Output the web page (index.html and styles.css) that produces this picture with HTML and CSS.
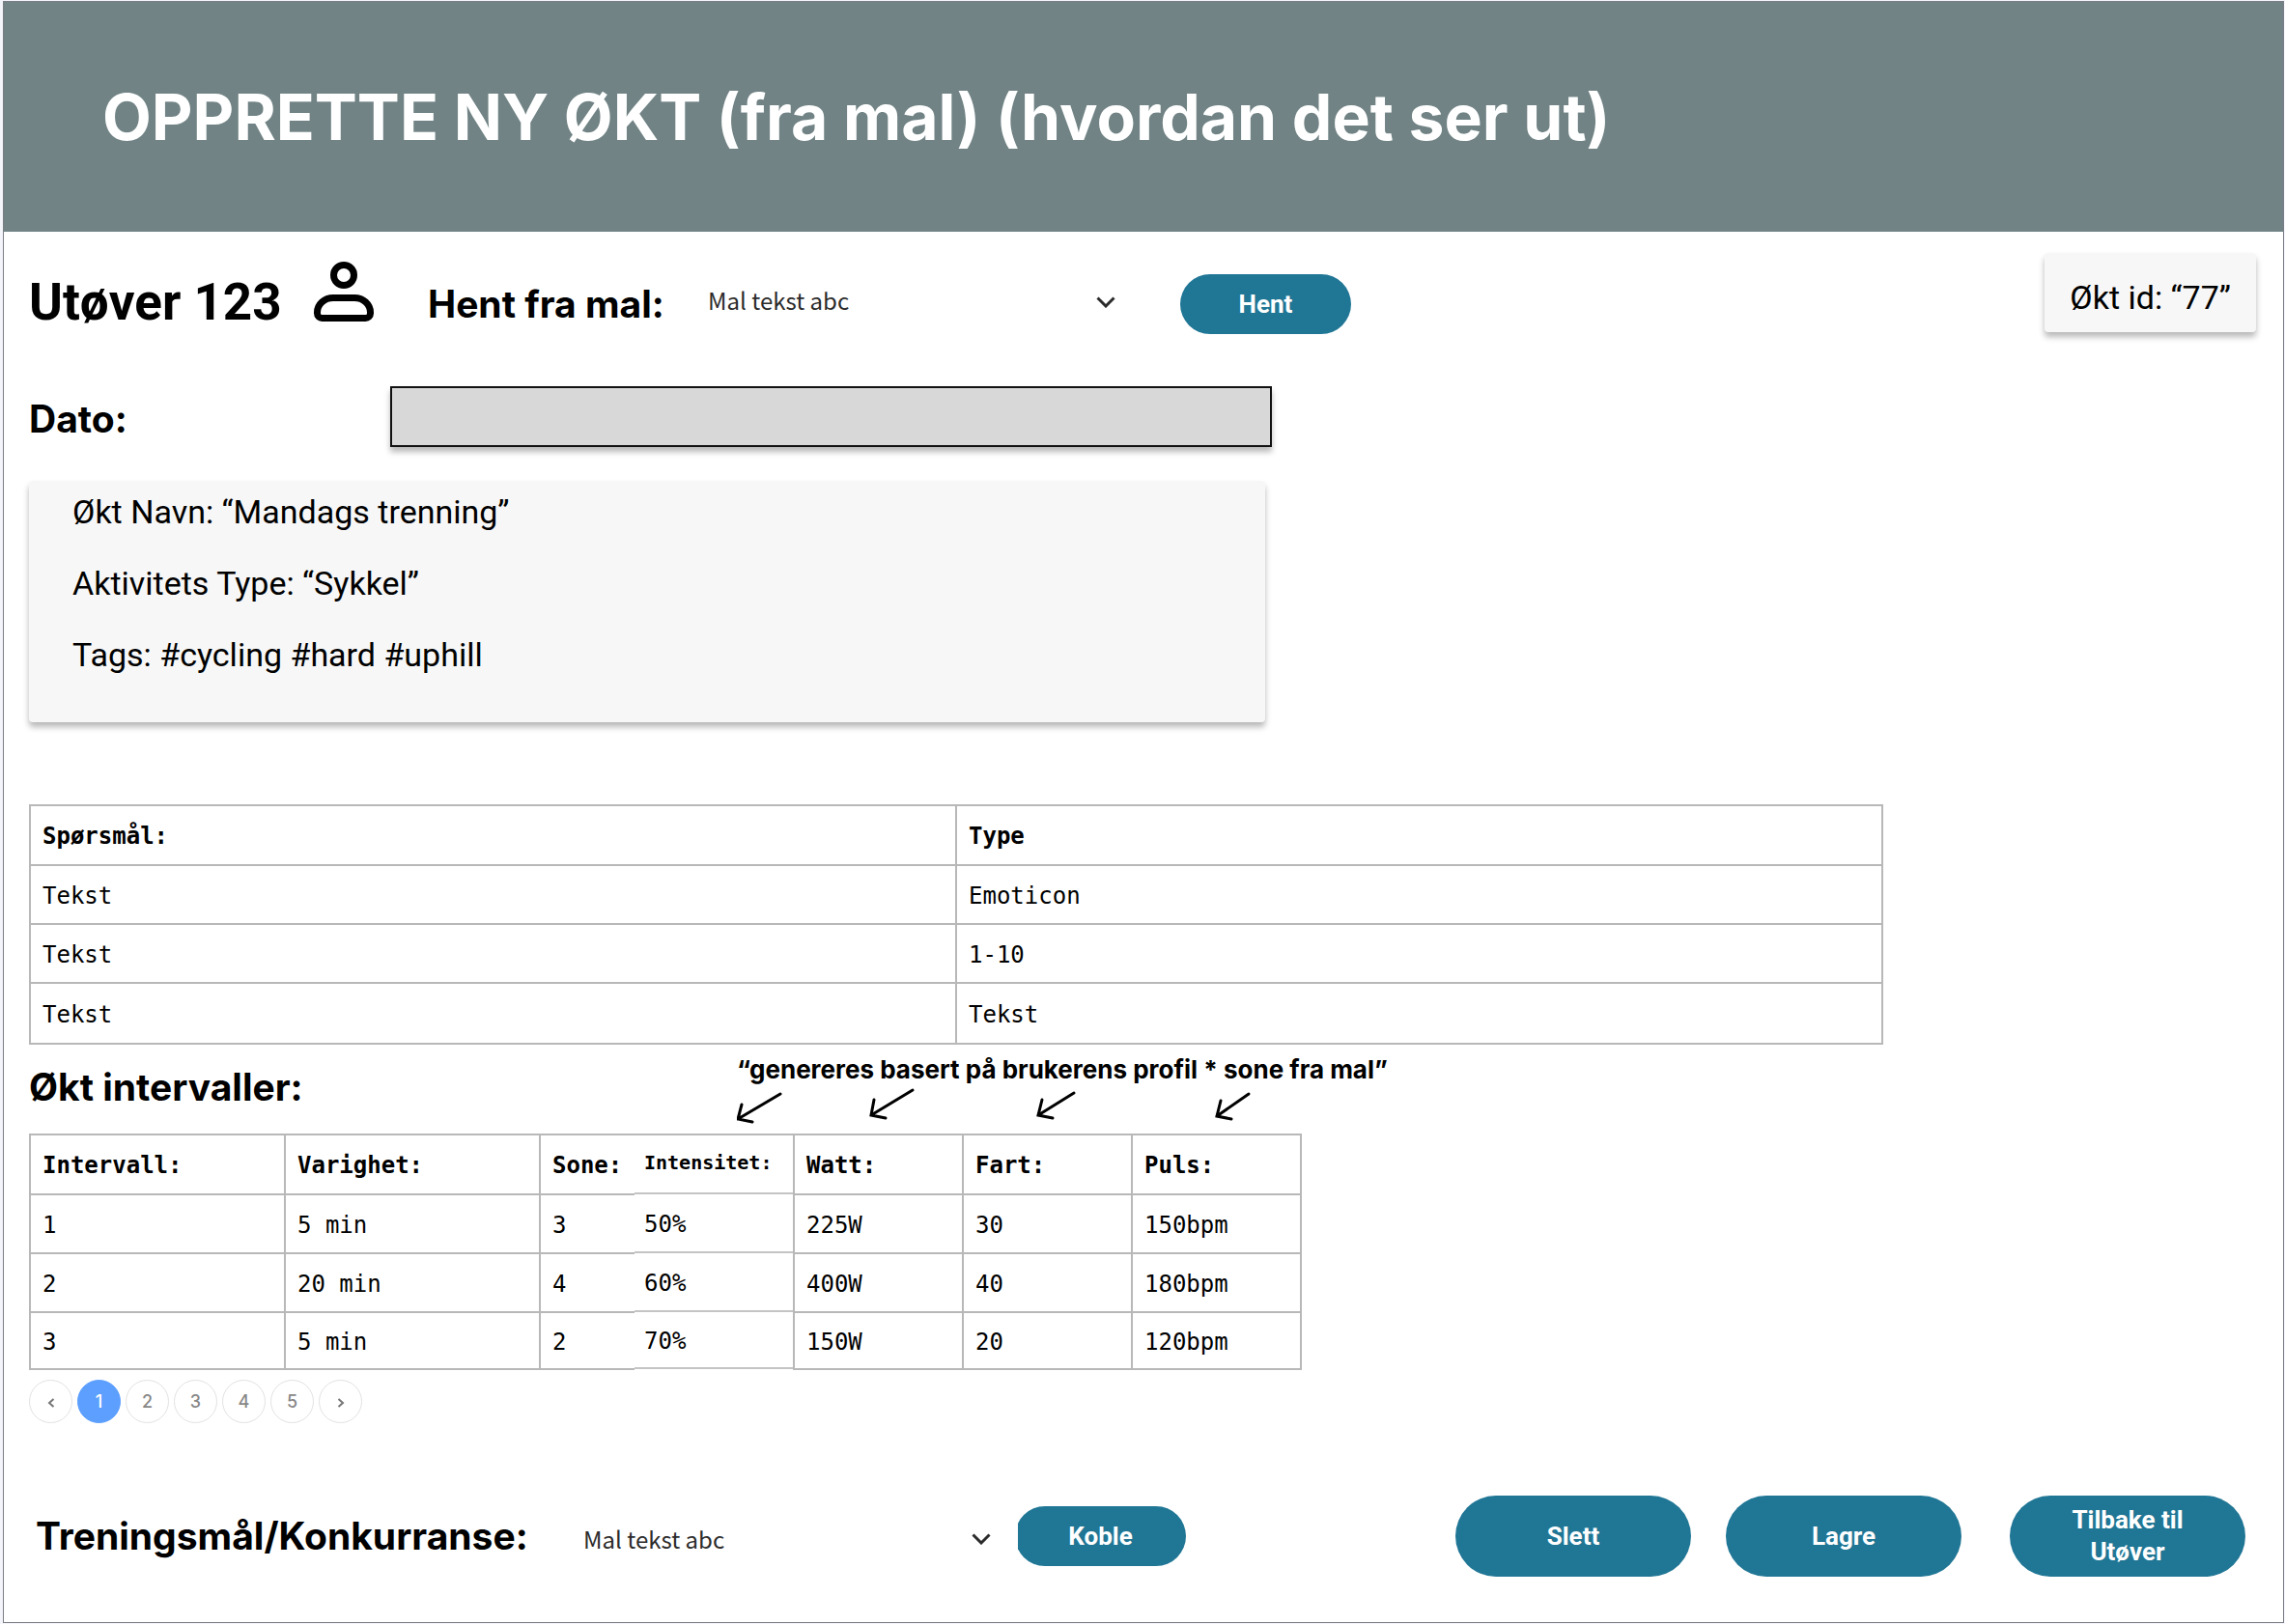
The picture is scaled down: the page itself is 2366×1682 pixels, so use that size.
FILE: index.html
```html
<!DOCTYPE html>
<html lang="no">
<head>
<meta charset="utf-8">
<meta name="viewport" content="width=device-width, initial-scale=1">
<title>Opprette ny økt</title>
<link rel="stylesheet" href="styles.css">
</head>
<body>
<div class="page">
  <header class="banner">
    <h1>OPPRETTE NY ØKT (fra mal) (hvordan det ser ut)</h1>
  </header>
  <main class="content">
    <section class="top-row">
      <h2 class="athlete">Utøver 123</h2>
      <svg class="person" viewBox="0 0 62 62" fill="none" stroke="#000" stroke-width="7" aria-hidden="true">
        <circle cx="31" cy="14" r="10.5"/>
        <path d="M20 37.5h22a16.5 15 0 0 1 16.5 15v1a5 5 0 0 1-5 5H8.5a5 5 0 0 1-5-5v-1a16.5 15 0 0 1 16.5-15z"/>
      </svg>
      <label class="label template-label" for="template">Hent fra mal:</label>
      <div class="dropdown">
        <select id="template"><option>Mal tekst abc</option></select>
        <svg class="chevron" viewBox="0 0 20 12" fill="none" stroke="#2b2b2b" stroke-width="3" aria-hidden="true"><path d="M1.5 1.5L10 10l8.5-8.5"/></svg>
      </div>
      <button class="button fetch" type="button">Hent</button>
      <p class="card session-id">Økt id: “77”</p>
    </section>

    <div class="date-row">
      <label class="label" for="date">Dato:</label>
      <input id="date" class="date-input" type="text">
    </div>

    <section class="card info">
      <p>Økt Navn: “Mandags trenning”</p>
      <p>Aktivitets Type: “Sykkel”</p>
      <p>Tags: #cycling #hard #uphill</p>
    </section>

    <table class="grid questions">
      <thead><tr><th>Spørsmål:</th><th>Type</th></tr></thead>
      <tbody>
        <tr><td>Tekst</td><td>Emoticon</td></tr>
        <tr><td>Tekst</td><td>1-10</td></tr>
        <tr><td>Tekst</td><td>Tekst</td></tr>
      </tbody>
    </table>

    <div class="interval-head">
      <h2 class="label">Økt intervaller:</h2>
      <div class="note">
        <p>“genereres basert på brukerens profil * sone fra mal”</p>
        <svg class="arrows" viewBox="0 0 540 44" fill="none" stroke="#000" stroke-width="3" stroke-linecap="round" aria-hidden="true">
          <path d="M45 9L1 35M5 20L1 35l15 3"/>
          <path d="M182 5l-43 26M142 15l-3 16 15 3"/>
          <path d="M349 8l-37 23M316 15l-4 16 15 3"/>
          <path d="M530 9l-33 23M501 16l-4 16 15 3"/>
        </svg>
      </div>
    </div>

    <table class="grid intervals">
      <colgroup><col class="c-wide"><col class="c-wide"><col class="c-zone"><col class="c-intensity"><col class="c-value"><col class="c-value"><col class="c-value"></colgroup>
      <thead>
        <tr><th>Intervall:</th><th>Varighet:</th><th class="open">Sone:</th><th class="intensity">Intensitet:</th><th>Watt:</th><th>Fart:</th><th>Puls:</th></tr>
      </thead>
      <tbody>
        <tr><td>1</td><td>5 min</td><td class="open">3</td><td class="intensity">50%</td><td>225W</td><td>30</td><td>150bpm</td></tr>
        <tr><td>2</td><td>20 min</td><td class="open">4</td><td class="intensity">60%</td><td>400W</td><td>40</td><td>180bpm</td></tr>
        <tr><td>3</td><td>5 min</td><td class="open">2</td><td class="intensity">70%</td><td>150W</td><td>20</td><td>120bpm</td></tr>
      </tbody>
    </table>

    <nav class="pager" aria-label="Sider">
      <button type="button" aria-label="Forrige"><svg viewBox="0 0 8 10" aria-hidden="true"><path d="M6.5 1L2 5l4.5 4"/></svg></button>
      <button type="button" class="current" aria-current="page">1</button>
      <button type="button">2</button>
      <button type="button">3</button>
      <button type="button">4</button>
      <button type="button">5</button>
      <button type="button" aria-label="Neste"><svg viewBox="0 0 8 10" aria-hidden="true"><path d="M1.5 1L6 5 1.5 9"/></svg></button>
    </nav>

    <footer class="bottom-row">
      <label class="label goal-label" for="goal">Treningsmål/Konkurranse:</label>
      <div class="dropdown">
        <select id="goal"><option>Mal tekst abc</option></select>
        <svg class="chevron" viewBox="0 0 20 12" fill="none" stroke="#2b2b2b" stroke-width="3" aria-hidden="true"><path d="M1.5 1.5L10 10l8.5-8.5"/></svg>
      </div>
      <button class="button link" type="button">Koble</button>
      <div class="actions">
        <button class="button large" type="button">Slett</button>
        <button class="button large" type="button">Lagre</button>
        <button class="button large back" type="button">Tilbake til Utøver</button>
      </div>
    </footer>
  </main>
</div>
</body>
</html>
```
FILE: styles.css
```css
* { box-sizing: border-box; }

body {
  margin: 0;
  padding: 1px 1px 1px 3px;
  background: #f4f5fa;
  color: #000;
  font-family: Roboto, "Liberation Sans", sans-serif;
}

h1, h2, p { margin: 0; }

.page {
  min-height: calc(100vh - 2px);
  border: 1px solid #7b7d85;
  background: #fff;
}

.banner {
  padding: 79px 102px;
  background: #718385;
}

.banner h1 {
  color: #fff;
  font: 700 66px/80px Inter, sans-serif;
}

.content { padding: 22px 28px 46px 26px; }

.label { font: 700 39px/48px Inter, sans-serif; }

.top-row {
  display: flex;
  align-items: center;
  min-height: 106px;
}

.athlete {
  flex: 0 0 295px;
  padding-bottom: 4px;
  font-size: 53px;
  font-weight: 700;
  line-height: 60px;
}

.person {
  align-self: flex-start;
  flex: none;
  width: 62px;
  height: 62px;
  margin-top: 9px;
}

.template-label {
  flex: 0 0 290px;
  margin-left: 56px;
}

.dropdown {
  position: relative;
  flex: 0 0 425px;
}

.dropdown select {
  width: 100%;
  height: 48px;
  padding: 0;
  border: 0;
  appearance: none;
  background: transparent;
  color: #2b2b2b;
  font: 400 24px/48px "Noto Sans CJK SC", sans-serif;
}

.top-row .dropdown { padding-bottom: 8px; }

.bottom-row .dropdown { padding-top: 6px; }

.chevron {
  position: absolute;
  top: 20px;
  right: 3px;
  width: 20px;
  height: 12px;
  pointer-events: none;
}

.button {
  flex: none;
  width: 177px;
  height: 62px;
  padding: 0 12px;
  border: 0;
  border-radius: 42px;
  background: #207695;
  color: #fff;
  font: 700 26px/33px Roboto, sans-serif;
}

.fetch { margin-left: 64px; }

.card {
  border-radius: 4px;
  background: #f7f7f7;
  box-shadow: 0 5px 6px rgba(0, 0, 0, 0.28);
  font-size: 34px;
  line-height: 40px;
}

.session-id {
  align-self: flex-start;
  margin-left: auto;
  padding: 26px 26px 16px;
}

.date-row {
  display: flex;
  align-items: center;
  margin-top: 32px;
}

.date-row .label {
  flex: 0 0 374px;
  padding-top: 4px;
}

.date-input {
  flex: 0 1 913px;
  height: 63px;
  padding: 0 16px;
  border: 2px solid #111;
  border-radius: 0;
  background: #d8d8d8;
  box-shadow: 0 5px 6px rgba(0, 0, 0, 0.28);
  font-size: 32px;
}

.info {
  display: flex;
  flex-direction: column;
  gap: 34px;
  max-width: 1280px;
  margin-top: 35px;
  padding: 12px 45px 50px;
}

.grid {
  border-top: 2px solid #b8b8b8;
  border-left: 2px solid #b8b8b8;
  border-collapse: separate;
  border-spacing: 0;
  table-layout: fixed;
  font: 400 24px/32px "DejaVu Sans Mono", monospace;
}

.grid th,
.grid td {
  height: 61px;
  padding: 2px 12px 0;
  border-right: 2px solid #b8b8b8;
  border-bottom: 2px solid #b8b8b8;
  text-align: left;
}

.grid th {
  height: 62px;
  font-weight: 700;
}

.questions {
  width: 1920px;
  max-width: 100%;
  margin-top: 85px;
}

.intervals {
  width: 1316px;
  max-width: 100%;
}

.c-wide { width: 264px; }
.c-zone { width: 97px; }
.c-intensity { width: 166px; }
.c-value { width: 175px; }

.grid .open {
  padding-right: 0;
  border-right: 0;
}

.grid .intensity {
  padding: 0 0 2px 10px;
  border-bottom: 0;
  background: linear-gradient(#c4c4c4, #c4c4c4) left bottom 1px / 100% 2px no-repeat;
}

.grid th.intensity {
  padding-bottom: 6px;
  font-size: 20px;
}

.questions tr:last-child td { height: 63px; }

.intervals tr:last-child td { height: 59px; }

.interval-head {
  display: flex;
  align-items: flex-start;
  min-height: 92px;
  padding-top: 10px;
}

.interval-head .label {
  flex: 0 0 733px;
  padding-top: 10px;
}

.note p { font: 700 26px/32px Inter, sans-serif; }

.arrows {
  display: block;
  width: 540px;
  height: 44px;
}

.pager {
  display: flex;
  gap: 5px;
  margin-top: 10px;
}

.pager button {
  width: 45px;
  height: 45px;
  padding: 0;
  border: 1px solid #e2e2e2;
  border-radius: 50%;
  background: #fff;
  color: #888;
  font: 500 18px/24px Inter, sans-serif;
}

.pager .current {
  border-color: #5c9fff;
  background: #5c9fff;
  color: #fff;
}

.pager svg {
  width: 8px;
  height: 10px;
  fill: none;
  stroke: #777;
  stroke-width: 2;
}

.bottom-row {
  display: flex;
  align-items: center;
  margin-top: 75px;
  padding: 0 11px 0 7px;
}

.goal-label { flex: 0 0 567px; }

.bottom-row .chevron { top: 24px; }

.link {
  margin-left: 22px;
  clip-path: inset(0 0 0 3px);
}

.actions {
  display: flex;
  gap: 36px;
  margin-left: auto;
}

.large {
  width: 244px;
  height: 84px;
}

.back {
  margin-left: 14px;
  padding: 0 50px;
}
```
